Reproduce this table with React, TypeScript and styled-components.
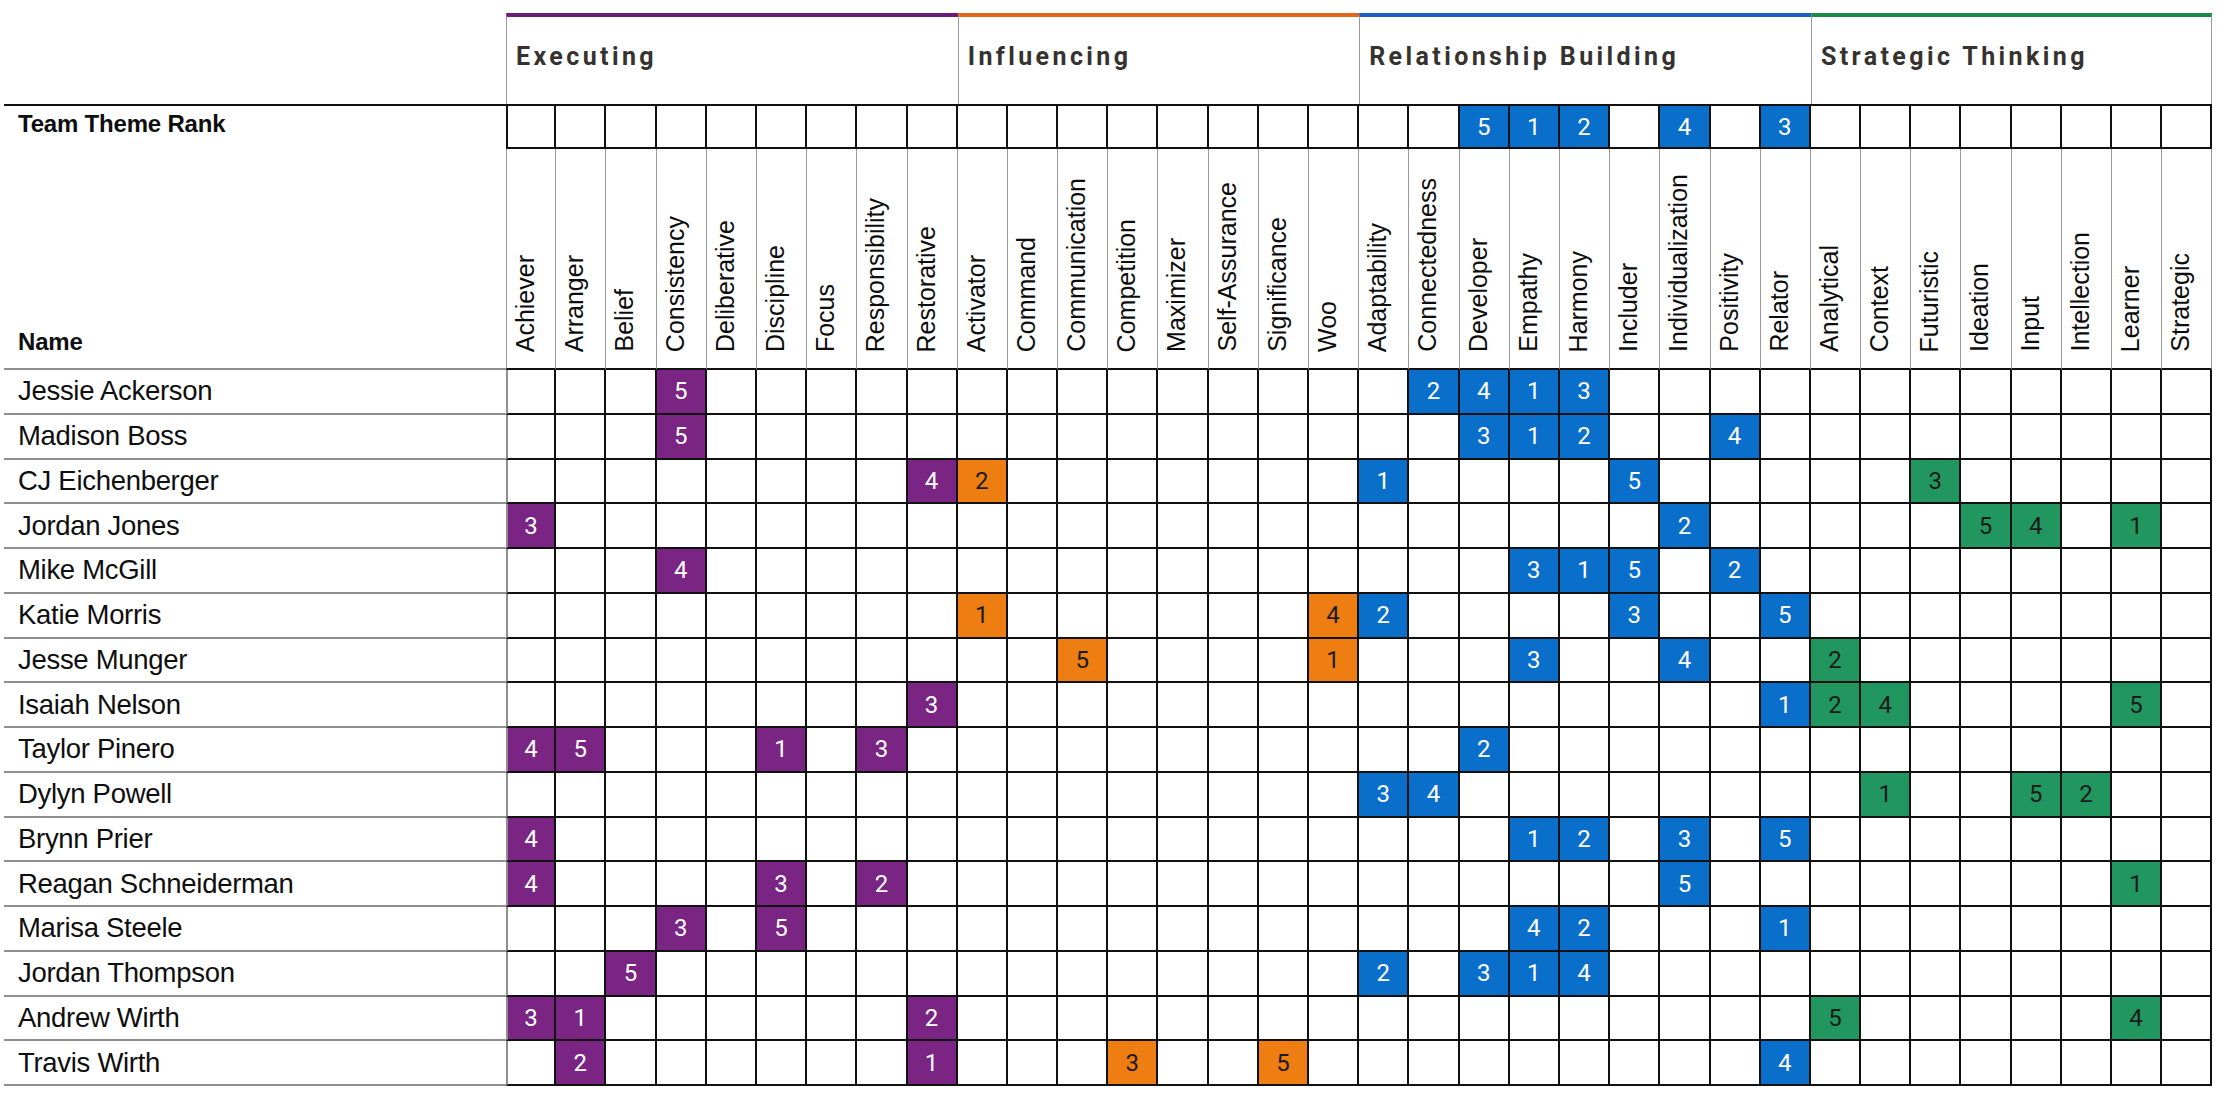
import React from "react";
import styled, { createGlobalStyle, css } from "styled-components";

type Domain = "executing" | "influencing" | "relationship" | "strategic";

const palette: Record<Domain, { line: string; fill: string; ink: string }> = {
  executing: { line: "#6c1b78", fill: "#7a2483", ink: "#ffffff" },
  influencing: { line: "#e2661b", fill: "#ee7d12", ink: "#1b1b1b" },
  relationship: { line: "#1a5fc6", fill: "#0a6ecb", ink: "#ffffff" },
  strategic: { line: "#1a8a4b", fill: "#22965f", ink: "#1b1b1b" },
};

const groups: { domain: Domain; title: string; themes: string[] }[] = [
  {
    domain: "executing",
    title: "Executing",
    themes: [
      "Achiever",
      "Arranger",
      "Belief",
      "Consistency",
      "Deliberative",
      "Discipline",
      "Focus",
      "Responsibility",
      "Restorative",
    ],
  },
  {
    domain: "influencing",
    title: "Influencing",
    themes: [
      "Activator",
      "Command",
      "Communication",
      "Competition",
      "Maximizer",
      "Self-Assurance",
      "Significance",
      "Woo",
    ],
  },
  {
    domain: "relationship",
    title: "Relationship Building",
    themes: [
      "Adaptability",
      "Connectedness",
      "Developer",
      "Empathy",
      "Harmony",
      "Includer",
      "Individualization",
      "Positivity",
      "Relator",
    ],
  },
  {
    domain: "strategic",
    title: "Strategic Thinking",
    themes: [
      "Analytical",
      "Context",
      "Futuristic",
      "Ideation",
      "Input",
      "Intellection",
      "Learner",
      "Strategic",
    ],
  },
];

const columns = groups.flatMap((g) => g.themes.map((theme) => ({ theme, domain: g.domain })));

const teamRank: Record<string, number> = {
  Developer: 5,
  Empathy: 1,
  Harmony: 2,
  Individualization: 4,
  Relator: 3,
};

const people: [string, Record<string, number>][] = [
  ["Jessie Ackerson", { Consistency: 5, Connectedness: 2, Developer: 4, Empathy: 1, Harmony: 3 }],
  ["Madison Boss", { Consistency: 5, Developer: 3, Empathy: 1, Harmony: 2, Positivity: 4 }],
  ["CJ Eichenberger", { Restorative: 4, Activator: 2, Adaptability: 1, Includer: 5, Futuristic: 3 }],
  ["Jordan Jones", { Achiever: 3, Individualization: 2, Ideation: 5, Input: 4, Learner: 1 }],
  ["Mike McGill", { Consistency: 4, Empathy: 3, Harmony: 1, Includer: 5, Positivity: 2 }],
  ["Katie Morris", { Activator: 1, Woo: 4, Adaptability: 2, Includer: 3, Relator: 5 }],
  ["Jesse Munger", { Communication: 5, Woo: 1, Empathy: 3, Individualization: 4, Analytical: 2 }],
  ["Isaiah Nelson", { Restorative: 3, Relator: 1, Analytical: 2, Context: 4, Learner: 5 }],
  ["Taylor Pinero", { Achiever: 4, Arranger: 5, Discipline: 1, Responsibility: 3, Developer: 2 }],
  ["Dylyn Powell", { Adaptability: 3, Connectedness: 4, Context: 1, Input: 5, Intellection: 2 }],
  ["Brynn Prier", { Achiever: 4, Empathy: 1, Harmony: 2, Individualization: 3, Relator: 5 }],
  ["Reagan Schneiderman", { Achiever: 4, Discipline: 3, Responsibility: 2, Individualization: 5, Learner: 1 }],
  ["Marisa Steele", { Consistency: 3, Discipline: 5, Empathy: 4, Harmony: 2, Relator: 1 }],
  ["Jordan Thompson", { Belief: 5, Adaptability: 2, Developer: 3, Empathy: 1, Harmony: 4 }],
  ["Andrew Wirth", { Achiever: 3, Arranger: 1, Restorative: 2, Analytical: 5, Learner: 4 }],
  ["Travis Wirth", { Arranger: 2, Restorative: 1, Competition: 3, Significance: 5, Relator: 4 }],
];

const NAME_W = 502;
const COL_W = 50.2;
const ROW_H = 44.75;

const GlobalStyle = createGlobalStyle`
  * { box-sizing: border-box; }
  body {
    margin: 0;
    background: #ffffff;
    color: #141414;
    font-family: "Liberation Sans", Arial, sans-serif;
  }
`;

const Sheet = styled.div`
  display: grid;
  grid-template-columns: ${NAME_W}px repeat(${columns.length}, ${COL_W}px);
  grid-template-rows: 91px 45px 221px repeat(${people.length}, ${ROW_H}px);
  margin: 13px 0 0 4px;
  width: max-content;
`;

const Corner = styled.div``;

const GroupHead = styled.div<{ $span: number; $line: string; $last?: boolean }>`
  grid-column: span ${({ $span }) => $span};
  border-top: 4px solid ${({ $line }) => $line};
  border-left: 1.5px solid #9b9b9b;
  ${({ $last }) => $last && "border-right: 1.5px solid #9b9b9b;"}
  padding: 27px 0 0 9px;
`;

const GroupTitle = styled.span`
  font-family: Roboto, "Liberation Sans", sans-serif;
  font-weight: 700;
  font-size: 25px;
  line-height: 1;
  letter-spacing: 3.4px;
  color: #36322f;
  white-space: nowrap;
`;

const RowLabel = styled.div<{ $rank?: boolean }>`
  display: flex;
  padding-left: 14px;
  font-weight: 700;
  font-size: 24px;
  line-height: 1;
  letter-spacing: -0.2px;
  color: #0e0e0e;
  ${({ $rank }) =>
    $rank
      ? css`
          align-items: flex-start;
          padding-top: 6px;
          border-top: 2px solid #111;
        `
      : css`
          align-items: flex-end;
          padding-bottom: 14px;
          border-bottom: 2px solid #8f8f8f;
        `}
`;

const Cell = styled.div<{ $fill?: string; $ink?: string; $first?: boolean; $rank?: boolean }>`
  display: flex;
  align-items: center;
  justify-content: center;
  font-family: Roboto, "Liberation Sans", sans-serif;
  font-size: 24px;
  line-height: 1;
  background: ${({ $fill }) => $fill ?? "#ffffff"};
  color: ${({ $ink }) => $ink ?? "#1b1b1b"};
  border-right: 2px solid #111;
  border-bottom: 2px solid #111;
  ${({ $rank }) => $rank && "border-top: 2px solid #111;"}
  ${({ $first, $rank }) => $first && `border-left: 2px solid ${$rank ? "#111" : "#8e8e8e"};`}
`;

const ThemeHead = styled.div<{ $first?: boolean }>`
  display: flex;
  align-items: flex-end;
  padding: 0 0 16px 4px;
  border-right: 1.5px solid #9b9b9b;
  border-bottom: 2px solid #111;
  ${({ $first }) => $first && "border-left: 1.5px solid #9b9b9b;"}
`;

const ThemeLabel = styled.span`
  writing-mode: vertical-rl;
  transform: rotate(180deg);
  font-size: 25px;
  line-height: 1.15;
  color: #0c0c0c;
  white-space: nowrap;
`;

const PersonName = styled.div`
  display: flex;
  align-items: center;
  padding-left: 14px;
  font-size: 27.5px;
  letter-spacing: -0.3px;
  color: #0e0e0e;
  white-space: nowrap;
  border-bottom: 2px solid #8f8f8f;
`;

const RankCells = ({ ranks, rank }: { ranks: Record<string, number>; rank?: boolean }) => (
  <>
    {columns.map(({ theme, domain }, i) => {
      const value = ranks[theme];
      const tone = value ? palette[domain] : undefined;
      return (
        <Cell key={theme} $rank={rank} $first={i === 0} $fill={tone?.fill} $ink={tone?.ink}>
          {value ?? ""}
        </Cell>
      );
    })}
  </>
);

export default function App() {
  return (
    <>
      <GlobalStyle />
      <Sheet>
        <Corner />
        {groups.map((g, i) => (
          <GroupHead
            key={g.domain}
            $span={g.themes.length}
            $line={palette[g.domain].line}
            $last={i === groups.length - 1}
          >
            <GroupTitle>{g.title}</GroupTitle>
          </GroupHead>
        ))}

        <RowLabel $rank>Team Theme Rank</RowLabel>
        <RankCells ranks={teamRank} rank />

        <RowLabel>Name</RowLabel>
        {columns.map(({ theme }, i) => (
          <ThemeHead key={theme} $first={i === 0}>
            <ThemeLabel>{theme}</ThemeLabel>
          </ThemeHead>
        ))}

        {people.map(([name, ranks]) => (
          <React.Fragment key={name}>
            <PersonName>{name}</PersonName>
            <RankCells ranks={ranks} />
          </React.Fragment>
        ))}
      </Sheet>
    </>
  );
}
